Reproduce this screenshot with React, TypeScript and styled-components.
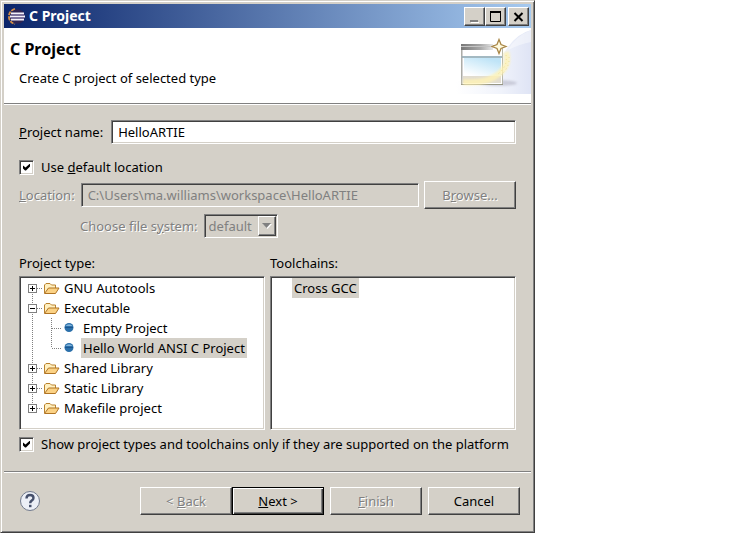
import React, { useState } from "react";
import styled, { createGlobalStyle, css } from "styled-components";

const face = "#d4d0c8";
const shade = "#808080";
const dark = "#404040";

const GlobalStyle = createGlobalStyle`
  * { box-sizing: border-box; }
  body {
    margin: 0;
    background: #fff;
    color: #000;
    font: 13px/20px "Noto Sans", "Open Sans", sans-serif;
  }
  button, input, select { font: inherit; color: inherit; }
`;

const sunken = css`
  border: 1px solid;
  border-color: ${shade} #fff #fff ${shade};
  box-shadow: inset 1px 1px ${dark}, inset -1px -1px ${face};
`;

const raised = css`
  border: 1px solid;
  border-color: #fff ${dark} ${dark} #fff;
  box-shadow: inset -1px -1px ${shade};
`;

const etched = css`
  color: ${shade};
  text-shadow: 1px 1px #fff;
`;

const Dialog = styled.main`
  width: 100%;
  max-width: 535px;
  padding: 2px;
  background: ${face};
  border: 1px solid;
  border-color: ${face} ${dark} ${dark} ${face};
  box-shadow: inset 1px 1px #fff, inset -1px -1px ${shade};
`;

const TitleBar = styled.header`
  display: flex;
  align-items: center;
  gap: 4px;
  height: 24px;
  margin: 1px 1px 0;
  padding: 0 2px 0 4px;
  background: linear-gradient(to right, #0a246a, #a6caf0);
  color: #fff;
  font-size: 14px;
  font-weight: 700;
`;

const TitleText = styled.span`
  flex: 1;
`;

const CaptionButtons = styled.div`
  display: flex;
`;

const CaptionButton = styled.button<{ $apart?: boolean }>`
  ${raised}
  display: grid;
  place-items: center;
  width: 21px;
  height: 19px;
  margin-left: ${(p) => (p.$apart ? "2px" : "0")};
  padding: 0;
  background: ${face};
  color: #000;
`;

const Banner = styled.section`
  display: flex;
  justify-content: space-between;
  margin: 0 1px;
  height: 76px;
  background: #fff;
  border-bottom: 1px solid ${shade};
`;

const BannerText = styled.div`
  padding: 9px 6px;
`;

const BannerTitle = styled.h1`
  margin: 0;
  font-size: 16px;
  line-height: 24px;
`;

const BannerHint = styled.p`
  margin: 7px 0 0 9px;
`;

const Form = styled.form`
  margin: 0 1px;
  border-top: 1px solid #fff;
`;

const Fields = styled.div`
  display: flex;
  flex-direction: column;
  padding: 15px 15px 17px;
`;

const FieldRow = styled.div<{ $indent?: boolean }>`
  display: flex;
  align-items: center;
  gap: 6px;
  padding-left: ${(p) => (p.$indent ? "61px" : "0")};
  margin-bottom: ${(p) => (p.$indent ? "15px" : "5px")};
`;

const NameRow = styled(FieldRow)`
  gap: 8px;
  margin-bottom: 13px;
`;

const Label = styled.label<{ $disabled?: boolean }>`
  white-space: nowrap;
  ${(p) => p.$disabled && etched}
`;

const TextBox = styled.input`
  ${sunken}
  flex: 1;
  min-width: 0;
  height: 24px;
  padding: 0 6px;
  border-radius: 0;
  background: #fff;
  outline: none;
  &:disabled {
    background: ${face};
    color: ${shade};
  }
`;

const CheckLabel = styled.label`
  display: flex;
  align-items: center;
  gap: 7px;
  min-height: 20px;
`;

const LocationCheck = styled(CheckLabel)`
  margin-bottom: 4px;
`;

const Tick = styled.input`
  ${sunken}
  appearance: none;
  flex: none;
  display: grid;
  place-items: center;
  width: 15px;
  height: 15px;
  margin: 0;
  background: #fff;
  &:checked::after {
    content: "";
    width: 7px;
    height: 7px;
    background: #000;
    clip-path: polygon(0 29%, 0 71%, 29% 100%, 43% 100%, 100% 43%, 100% 0, 36% 57%);
  }
`;

const PushButton = styled.button<{ $primary?: boolean }>`
  ${raised}
  width: 92px;
  height: 28px;
  padding: 0;
  background: ${face};
  ${(p) =>
    p.$primary &&
    css`
      border-color: #000;
      box-shadow: inset 1px 1px #fff, inset -1px -1px ${dark}, inset -2px -2px ${shade};
    `}
  &:disabled {
    ${etched}
  }
`;

const BrowseButton = styled(PushButton)`
  margin-left: -1px;
`;

const Combo = styled.div`
  ${sunken}
  display: flex;
  align-items: stretch;
  height: 24px;
  padding: 1px;
`;

const ComboSelect = styled.select`
  appearance: none;
  width: 52px;
  padding: 0 3px;
  border: 0;
  background: ${face};
  color: ${shade};
  opacity: 1;
`;

const ComboArrow = styled.span`
  ${raised}
  display: grid;
  place-items: center;
  width: 18px;
`;

const Panes = styled.div`
  display: grid;
  grid-template-columns: minmax(0, 1fr) minmax(0, 1fr);
  gap: 5px;
  margin-bottom: 4px;
`;

const Pane = styled.section`
  display: flex;
  flex-direction: column;
  gap: 3px;
`;

const PaneTitle = styled.h2`
  margin: 0;
  font-size: 13px;
  font-weight: 400;
`;

const ListBox = styled.ul`
  ${sunken}
  min-height: 154px;
  margin: 0;
  padding: 1px;
  background: #fff;
  list-style: none;
`;

const TreeRow = styled.li`
  display: flex;
  align-items: center;
  height: 20px;
  white-space: nowrap;
`;

const ItemText = styled.span<{ $selected?: boolean }>`
  padding: 0 2px;
  background: ${(p) => (p.$selected ? face : "transparent")};
`;

const ToolRow = styled(TreeRow)`
  padding-left: 20px;
`;

const Footer = styled.footer`
  display: flex;
  align-items: center;
  justify-content: space-between;
  padding: 15px 11px 15px 15px;
  border-top: 1px solid ${shade};
  box-shadow: inset 0 1px #fff;
`;

const HelpButton = styled.button`
  display: grid;
  padding: 0;
  border: 0;
  background: none;
`;

const Actions = styled.div`
  display: flex;
  gap: 6px;
`;

const Paged = styled.div`
  display: flex;
`;

const EclipseIcon = () => (
  <svg width="17" height="17" viewBox="0 0 17 17" aria-hidden="true">
    <path d="M7 1Q1 3 1 8.5T7 16" fill="none" stroke="#d08c48" strokeWidth="2" strokeDasharray="4 1" />
    <circle cx="9.5" cy="8.5" r="7.3" fill="#302552" />
    <path d="M3 5.5h13M2 8.5h15M3 11.5h13" stroke="#f4f1fa" strokeWidth="2" />
    <path d="M3 7h13M3 10h13" stroke="#6b5f96" />
  </svg>
);

const WizardArt = () => (
  <svg width="75" height="66" viewBox="0 0 75 66" aria-hidden="true">
    <defs>
      <linearGradient id="wash" x1="0" x2="1">
        <stop offset="0" stopColor="#fff" />
        <stop offset="0.6" stopColor="#f0f3fb" />
        <stop offset="1" stopColor="#dfe4f5" />
      </linearGradient>
      <linearGradient id="bar" x1="0" x2="1">
        <stop offset="0" stopColor="#777" />
        <stop offset="0.6" stopColor="#a8a8a8" />
        <stop offset="1" stopColor="#e8e8e8" />
      </linearGradient>
      <linearGradient id="glass" x1="0" y1="1" x2="0.6" y2="0">
        <stop offset="0.1" stopColor="#fff" />
        <stop offset="1" stopColor="#bfe4f7" />
      </linearGradient>
      <filter id="soft" x="-20%" y="-20%" width="140%" height="140%">
        <feGaussianBlur stdDeviation="1.2" />
      </filter>
    </defs>
    <path d="M0 66V54Q34 44 50 22Q60 6 75 2V66Z" fill="url(#wash)" />
    <path d="M75 2Q60 8 52 22Q64 16 75 14Z" fill="#fff" opacity="0.4" />
    <ellipse cx="42" cy="55" rx="19" ry="3" fill="#a9a9ba" opacity="0.5" filter="url(#soft)" />
    <path d="M5.5 17.5h41v39h-41z" fill="#fff" stroke="#b5b5a9" />
    <path d="M5 16h32v6H5z" fill="url(#bar)" />
    <path d="M5 18.5h29" stroke="#c4c4c4" />
    <path d="M5 28h41v2H5z" fill="#a3b9c2" />
    <path d="M8 30h37v18H8z" fill="url(#glass)" />
    <path d="M7 48h38v7H7z" fill="#e2ddd0" />
    <path d="M5 56.5h42" stroke="#969684" />
    <path d="M6 22v34" stroke="#a5a5a5" />
    <path d="M50 24Q54 36 44 45Q32 56 7 54" fill="none" stroke="#fff3b5" strokeWidth="6" opacity="0.8" filter="url(#soft)" />
    <path d="M50 27Q52 38 42 46M53 29Q54 39 45 47" fill="none" stroke="#efdf98" strokeDasharray="1 3" />
    <path d="M43 11.500l2 5 5 2-5 2-2 5-2-5-5-2 5-2z" fill="#fffbe0" stroke="#a98747" strokeWidth="1.300" />
  </svg>
);

const Guide = ({ open, first, last }: { open?: boolean; first?: boolean; last?: boolean }) => (
  <svg width="22" height="20" viewBox="0 0 22 20" shapeRendering="crispEdges" aria-hidden="true">
    <path
      d={`M11.5 ${first ? 10 : 0}V${last ? 10 : 20}M12 10.5H22`}
      stroke="#808080"
      strokeDasharray="1 1"
    />
    <path d="M7.5 6.5h8v8h-8z" fill="#fff" stroke="#808080" />
    <path d={open ? "M9 10.5h5" : "M9 10.5h5M11.5 8v5"} stroke="#000" />
  </svg>
);

const LeafGuide = ({ last }: { last?: boolean }) => (
  <svg width="42" height="20" viewBox="0 0 42 20" shapeRendering="crispEdges" aria-hidden="true">
    <path
      d={`M11.5 0V20M30.5 0V${last ? 10 : 20}M31 10.5H41`}
      stroke="#808080"
      strokeDasharray="1 1"
    />
  </svg>
);

const FolderIcon = () => (
  <svg width="19" height="16" viewBox="0 0 19 16" aria-hidden="true">
    <path d="M1.5 13V5l1.500-1.500h4L8.500 5h4v3" fill="#fff0c0" stroke="#b9822e" strokeLinejoin="round" />
    <path d="M1.500 13.500l4-5.500h10.500l-3.500 5.500z" fill="#fbd285" stroke="#b07424" strokeLinejoin="round" />
  </svg>
);

const BulletIcon = () => (
  <svg width="18" height="16" viewBox="0 0 18 16" aria-hidden="true">
    <circle cx="6" cy="7.500" r="4.500" fill="#2b70aa" />
    <path d="M2.500 6a4 3.500 0 0 1 7 0z" fill="#83b5dc" />
    <path d="M2 7.500h8" stroke="#1d5790" />
  </svg>
);

type Node = { name: string; open?: boolean; leaf?: boolean; first?: boolean; last?: boolean };

const nodes: Node[] = [
  { name: "GNU Autotools", first: true },
  { name: "Executable", open: true },
  { name: "Empty Project", leaf: true },
  { name: "Hello World ANSI C Project", leaf: true, last: true },
  { name: "Shared Library" },
  { name: "Static Library" },
  { name: "Makefile project", last: true },
];

export default function App() {
  const [name, setName] = useState("HelloARTIE");
  const [selected, setSelected] = useState("Hello World ANSI C Project");

  return (
    <>
      <GlobalStyle />
      <Dialog>
        <TitleBar>
          <EclipseIcon />
          <TitleText>C Project</TitleText>
          <CaptionButtons>
            <CaptionButton type="button" aria-label="Minimize">
              <svg width="13" height="13" viewBox="0 0 13 13">
                <path d="M2 10h8v2H2z" fill="#808080" />
                <path d="M3 12h8v1H3z" fill="#fff" />
              </svg>
            </CaptionButton>
            <CaptionButton type="button" aria-label="Maximize">
              <svg width="13" height="13" viewBox="0 0 13 13">
                <path d="M1.500 1.500h10v10h-10z" fill="none" stroke="#000" />
                <path d="M1 2h11" stroke="#000" strokeWidth="2" />
              </svg>
            </CaptionButton>
            <CaptionButton type="button" aria-label="Close" $apart>
              <svg width="13" height="13" viewBox="0 0 13 13">
                <path d="M2.500 3l8 8M10.500 3l-8 8" stroke="#000" strokeWidth="2" />
              </svg>
            </CaptionButton>
          </CaptionButtons>
        </TitleBar>

        <Banner>
          <BannerText>
            <BannerTitle>C Project</BannerTitle>
            <BannerHint>Create C project of selected type</BannerHint>
          </BannerText>
          <WizardArt />
        </Banner>

        <Form onSubmit={(e) => e.preventDefault()}>
          <Fields>
            <NameRow>
              <Label htmlFor="name">
                <u>P</u>roject name:
              </Label>
              <TextBox id="name" value={name} onChange={(e) => setName(e.target.value)} />
            </NameRow>
            <LocationCheck>
              <Tick type="checkbox" defaultChecked />
              <span>
                Use <u>d</u>efault location
              </span>
            </LocationCheck>
            <FieldRow>
              <Label htmlFor="location" $disabled>
                <u>L</u>ocation:
              </Label>
              <TextBox id="location" disabled value={"C:\\Users\\ma.williams\\workspace\\" + name} />
              <BrowseButton type="button" disabled>
                B<u>r</u>owse...
              </BrowseButton>
            </FieldRow>
            <FieldRow $indent>
              <Label htmlFor="filesystem" $disabled>
                Choose file s<u>y</u>stem:
              </Label>
              <Combo>
                <ComboSelect id="filesystem" disabled>
                  <option>default</option>
                </ComboSelect>
                <ComboArrow>
                  <svg width="10" height="6" viewBox="0 0 10 6" aria-hidden="true">
                    <path d="M1 1h9L5.500 6z" fill="#fff" />
                    <path d="M0 0h9L4.500 5z" fill="#808080" />
                  </svg>
                </ComboArrow>
              </Combo>
            </FieldRow>

            <Panes>
              <Pane>
                <PaneTitle id="types">Project type:</PaneTitle>
                <ListBox role="tree" aria-labelledby="types">
                  {nodes.map((n) => (
                    <TreeRow
                      key={n.name}
                      role="treeitem"
                      aria-level={n.leaf ? 2 : 1}
                      aria-expanded={n.leaf ? undefined : !!n.open}
                      aria-selected={n.name === selected}
                      onClick={() => setSelected(n.name)}
                    >
                      {n.leaf ? (
                        <LeafGuide last={n.last} />
                      ) : (
                        <Guide open={n.open} first={n.first} last={n.last} />
                      )}
                      {n.leaf ? <BulletIcon /> : <FolderIcon />}
                      <ItemText $selected={n.name === selected}>{n.name}</ItemText>
                    </TreeRow>
                  ))}
                </ListBox>
              </Pane>
              <Pane>
                <PaneTitle id="toolchains">Toolchains:</PaneTitle>
                <ListBox role="listbox" aria-labelledby="toolchains">
                  <ToolRow role="option" aria-selected>
                    <ItemText $selected>Cross GCC</ItemText>
                  </ToolRow>
                </ListBox>
              </Pane>
            </Panes>

            <CheckLabel>
              <Tick type="checkbox" defaultChecked />
              Show project types and toolchains only if they are supported on the platform
            </CheckLabel>
          </Fields>

          <Footer>
            <HelpButton type="button" aria-label="Help">
              <svg width="22" height="22" viewBox="0 0 22 22">
                <circle cx="11" cy="11" r="9.500" fill="#eceff7" stroke="#717a8e" />
                <path
                  d="M7.500 8.500q0-3.500 3.500-3.500t3.500 3q0 1.600-1.800 2.600-1.500 .9-1.500 2.600"
                  fill="none"
                  stroke="#46506c"
                  strokeWidth="2.400"
                />
                <path d="M10 14.800h2.500v2.400H10z" fill="#46506c" />
              </svg>
            </HelpButton>
            <Actions>
              <Paged>
                <PushButton type="button" disabled>
                  &lt; <u>B</u>ack
                </PushButton>
                <PushButton type="submit" $primary>
                  <u>N</u>ext &gt;
                </PushButton>
              </Paged>
              <PushButton type="button" disabled>
                <u>F</u>inish
              </PushButton>
              <PushButton type="button">Cancel</PushButton>
            </Actions>
          </Footer>
        </Form>
      </Dialog>
    </>
  );
}
